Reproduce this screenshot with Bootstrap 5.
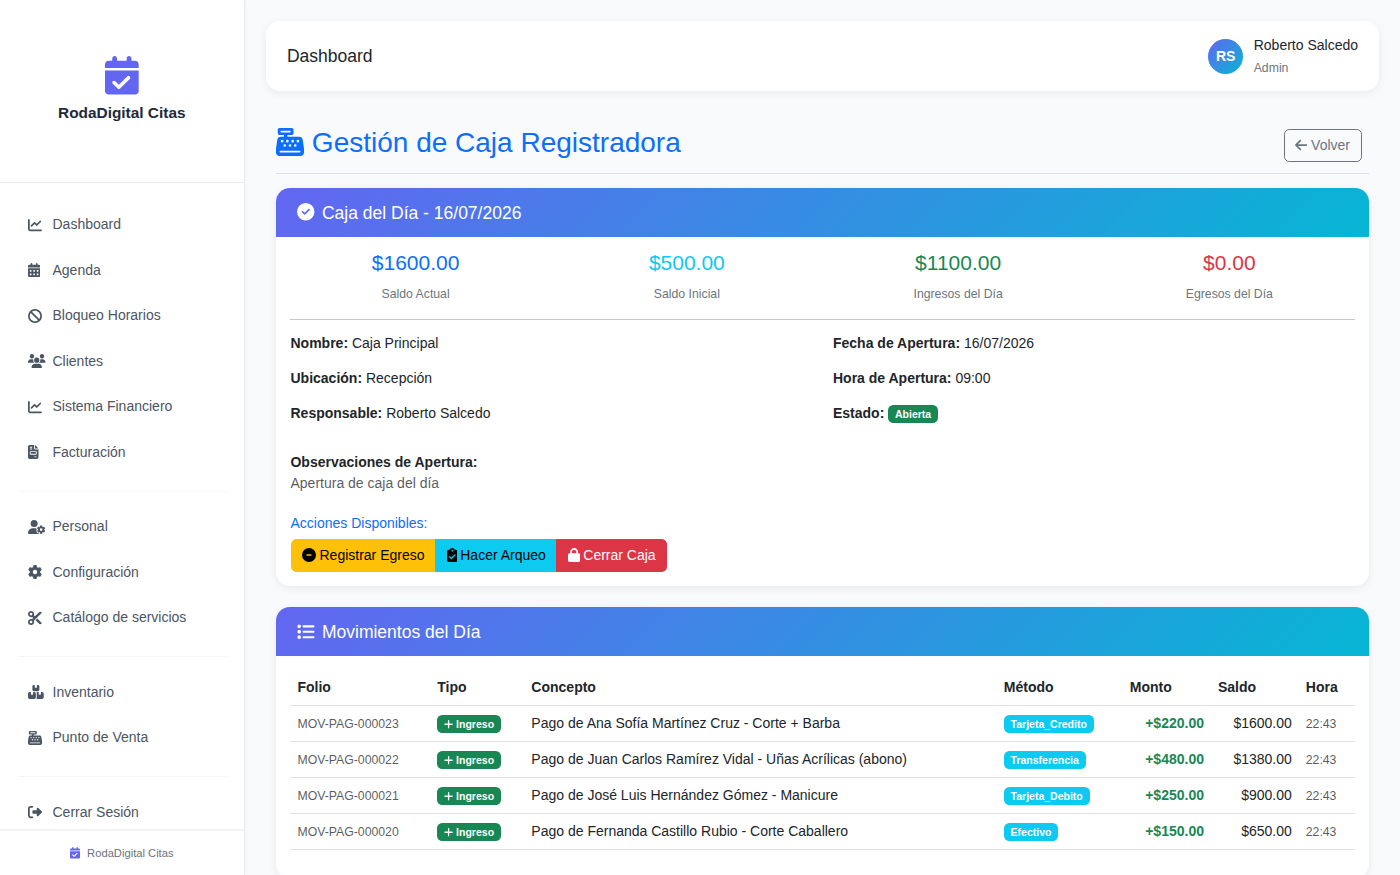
<!DOCTYPE html>
<html lang="es">
<head>
    <meta charset="UTF-8">
    <meta name="viewport" content="width=device-width, initial-scale=1">
    <title>RodaDigital Citas - Caja</title>
    <link rel="stylesheet" href="https://cdn.jsdelivr.net/npm/bootstrap@5.3.3/dist/css/bootstrap.min.css">
    <style>
        html { font-size: 14px; }
        body { font-family: "Liberation Sans", Arial, sans-serif; background: #f8fafc; overflow: hidden; color: #212529; }
        .ico { height: 1em; width: auto; fill: currentColor; vertical-align: -0.125em; }
        .app-shell { height: 875px; overflow: hidden; }
        .side-panel { width: 244.6px; flex: none; background: #fff; border-right: 1px solid #e9ecef; box-shadow: 1px 0 4px rgba(0,0,0,.03); height: 875px; }
        .side-brand { padding: 56px 14px 59px; border-bottom: 1px solid #e9ecef; text-align: center; height: 183px; }
        .side-brand .ico { font-size: 38.5px; color: #6366f1; display: block; margin: 0 auto 7px; }
        .side-brand h1 { font-size: 15.4px; font-weight: 700; line-height: 21px; color: #1e293b; margin: 0; }
        .side-nav { flex: 1 1 0; min-height: 0; overflow: hidden; padding: 18.75px 15px 0 17.5px; }
        .side-group { margin-bottom: 12px; padding-bottom: 16px; border-bottom: 1px solid #f6f7f8; }
        .side-group:last-child { border-bottom: 0; }
        .side-link { display: flex; align-items: center; padding: 0 .75rem; height: 45.5px; color: #4b5563; text-decoration: none; font-size: 14px; line-height: 21px; }
        .side-link .ico-box { width: 24.5px; flex: none; line-height: 1; }
        .side-link .ico { display: block; }
        .side-foot { height: 46px; border-top: 2px solid #f1f3f5; font-size: 11.2px; color: #6b7280; }
        .side-foot .ico { color: #6366f1; margin-right: 7px; font-size: 11.5px; }
        .main-area { padding: 21px; min-width: 0; }
        .top-bar { background: #fff; border-radius: 14px; box-shadow: 0 2px 8px rgba(0,0,0,.07); padding: 14px 21px 14px 21.4px; height: 70px; margin-bottom: 20px; }
        .top-bar .page-name { font-size: 17.5px; color: #212529; }
        .user-avatar { width: 35px; height: 35px; border-radius: 50%; background: linear-gradient(135deg, #6366f1, #06b6d4); color: #fff; font-weight: 700; font-size: 14px; }
        .user-role { font-size: 12.25px; color: #6c757d; margin-top: 2.5px; }
        .caja-title { color: #0d6efd; font-size: 28px; margin-top: 1px; margin-bottom: 6px; }
        .volver-btn { padding-left: 9.5px; padding-right: 10.5px; }
        .caja-card { border: 0; border-radius: 14px; box-shadow: 0 2px 8px rgba(0,0,0,.07); overflow: hidden; }
        .caja-card .card-body { padding-left: 14.4px; }
        .caja-head { background: linear-gradient(135deg, #6366f1, #06b6d4); color: #fff; padding: 15px 21px 13px; font-size: 17.5px; line-height: 21px; }
        .caja-head .ico { margin-right: 2.5px; }
        .stat-num { font-size: 21px; line-height: 24px; margin-bottom: 9.7px; }
        .stat-label { font-size: 12.25px; color: #6c757d; margin: 0; line-height: 21px; }
        .caja-card hr { margin: 13.3px 0 13.2px; }
        .actions-label { color: #0d6efd; font-size: 14px; font-weight: 400; }
        .btn-group { margin-left: .3px; }
        .btn-group .ico { margin-right: -.7px; }
        .mov-table { margin-bottom: 14px; }
        .mov-table th { font-weight: 700; }
    </style>
</head>
<body>
    <svg class="d-none">
        <defs>
            <path id="i-cal-check" d="M128 0c17.7 0 32 14.3 32 32V64H288V32c0-17.7 14.3-32 32-32s32 14.3 32 32V64h48c26.5 0 48 21.5 48 48v48H0V112C0 85.5 21.5 64 48 64H96V32c0-17.7 14.3-32 32-32zM0 192H448V464c0 26.5-21.5 48-48 48H48c-26.5 0-48-21.5-48-48V192zM329 305c9.4-9.4 9.4-24.6 0-33.9s-24.6-9.4-33.9 0l-111 111-47-47c-9.4-9.4-24.6-9.4-33.9 0s-9.4 24.6 0 33.9l64 64c9.4 9.4 24.6 9.4 33.9 0L329 305z"/>
            <path id="i-chart" d="M64 64c0-17.7-14.3-32-32-32S0 46.3 0 64V400c0 44.2 35.8 80 80 80H480c17.7 0 32-14.3 32-32s-14.3-32-32-32H80c-8.8 0-16-7.2-16-16V64zm406.6 86.6c12.5-12.5 12.5-32.8 0-45.3s-32.8-12.5-45.3 0L320 210.7l-57.4-57.4c-12.5-12.5-32.8-12.5-45.3 0l-112 112c-12.5 12.5-12.5 32.8 0 45.3s32.8 12.5 45.3 0L240 221.3l57.4 57.4c12.5 12.5 32.8 12.5 45.3 0l128-128z"/>
            <path id="i-cal-days" d="M128 0c17.7 0 32 14.3 32 32V64H288V32c0-17.7 14.3-32 32-32s32 14.3 32 32V64h48c26.5 0 48 21.5 48 48v48H0V112C0 85.5 21.5 64 48 64H96V32c0-17.7 14.3-32 32-32zM0 192H448V464c0 26.5-21.5 48-48 48H48c-26.5 0-48-21.5-48-48V192zm64 80v32c0 8.8 7.2 16 16 16h32c8.8 0 16-7.2 16-16V272c0-8.8-7.2-16-16-16H80c-8.8 0-16 7.2-16 16zm128 0v32c0 8.8 7.2 16 16 16h32c8.8 0 16-7.2 16-16V272c0-8.8-7.2-16-16-16H208c-8.8 0-16 7.2-16 16zm144-16c-8.8 0-16 7.2-16 16v32c0 8.8 7.2 16 16 16h32c8.8 0 16-7.2 16-16V272c0-8.8-7.2-16-16-16H336zM64 400v32c0 8.8 7.2 16 16 16h32c8.8 0 16-7.2 16-16V400c0-8.8-7.2-16-16-16H80c-8.8 0-16 7.2-16 16zm144-16c-8.8 0-16 7.2-16 16v32c0 8.8 7.2 16 16 16h32c8.8 0 16-7.2 16-16V400c0-8.8-7.2-16-16-16H208zm112 16v32c0 8.8 7.2 16 16 16h32c8.8 0 16-7.2 16-16V400c0-8.8-7.2-16-16-16H336c-8.8 0-16 7.2-16 16z"/>
            <path id="i-ban" d="M367.2 412.5L99.5 144.8C77.1 176.1 64 214.5 64 256c0 106 86 192 192 192c41.5 0 79.9-13.1 111.2-35.5zm45.3-45.3C434.9 335.9 448 297.5 448 256c0-106-86-192-192-192c-41.5 0-79.9 13.1-111.2 35.5L412.5 367.2zM0 256a256 256 0 1 1 512 0A256 256 0 1 1 0 256z"/>
            <path id="i-users" d="M144 0a80 80 0 1 1 0 160A80 80 0 1 1 144 0zM512 0a80 80 0 1 1 0 160A80 80 0 1 1 512 0zM0 298.7C0 239.8 47.8 192 106.7 192h42.7c15.9 0 31 3.5 44.6 9.7c-1.3 7.2-1.9 14.7-1.9 22.3c0 38.2 16.8 72.5 43.3 96c-.2 0-.4 0-.7 0H21.3C9.6 320 0 310.4 0 298.7zM405.3 320c-.2 0-.4 0-.7 0c26.6-23.5 43.3-57.8 43.3-96c0-7.6-.7-15-1.9-22.3c13.6-6.3 28.7-9.7 44.6-9.7h42.7C592.2 192 640 239.8 640 298.7c0 11.8-9.6 21.3-21.3 21.3H405.3zM224 224a96 96 0 1 1 192 0 96 96 0 1 1 -192 0zM128 485.3C128 411.7 187.7 352 261.3 352H378.7C452.3 352 512 411.7 512 485.3c0 14.7-11.9 26.7-26.7 26.7H154.7c-14.7 0-26.7-11.9-26.7-26.7z"/>
            <path id="i-invoice" d="M64 0C28.7 0 0 28.7 0 64V448c0 35.3 28.7 64 64 64H320c35.3 0 64-28.7 64-64V160H256c-17.7 0-32-14.3-32-32V0H64zM256 0V128H384L256 0zM80 64h64c8.8 0 16 7.2 16 16s-7.2 16-16 16H80c-8.8 0-16-7.2-16-16s7.2-16 16-16zm0 64h64c8.8 0 16 7.2 16 16s-7.2 16-16 16H80c-8.8 0-16-7.2-16-16s7.2-16 16-16zm16 96H288c17.7 0 32 14.3 32 32v64c0 17.7-14.3 32-32 32H96c-17.7 0-32-14.3-32-32V256c0-17.7 14.3-32 32-32zm0 32v64H288V256H96zM240 416h64c8.8 0 16 7.2 16 16s-7.2 16-16 16H240c-8.8 0-16-7.2-16-16s7.2-16 16-16z"/>
            <path id="i-user-gear" d="M224 0a128 128 0 1 1 0 256A128 128 0 1 1 224 0zM178.3 304h91.4c11.8 0 23.4 1.2 34.5 3.3c-2.1 18.5 7.4 35.6 21.8 44.8c-16.6 10.6-26.7 31.6-20 53.3c4 12.9 9.4 25.5 16.4 37.6s15.2 23.1 24.4 33c15.7 16.9 39.6 18.4 57.2 8.7v.9c0 9.2 2.7 18.5 7.9 26.3H29.7C13.3 512 0 498.7 0 482.3C0 383.8 79.8 304 178.3 304zM436 218.2c0-7 4.5-13.3 11.3-14.8c10.5-2.4 21.5-3.7 32.7-3.7s22.2 1.3 32.7 3.7c6.8 1.5 11.3 7.8 11.3 14.8v30.6c7.9 3.4 15.4 7.7 22.3 12.8l24.9-14.3c6.1-3.5 13.7-2.7 18.5 2.4c7.6 8.1 14.3 17.2 20.1 27.2s10.3 20.4 13.5 31c2.1 6.7-1.1 13.7-7.2 17.2l-25 14.4c.4 4 .7 8.1 .7 12.3s-.2 8.2-.7 12.3l25 14.4c6.1 3.5 9.2 10.5 7.2 17.2c-3.3 10.6-7.8 21-13.5 31s-12.5 19.1-20.1 27.2c-4.8 5.1-12.5 5.9-18.5 2.4l-24.9-14.3c-6.9 5.1-14.3 9.4-22.3 12.8l0 30.6c0 7-4.5 13.3-11.3 14.8c-10.5 2.4-21.5 3.7-32.7 3.7s-22.2-1.3-32.7-3.7c-6.8-1.5-11.3-7.8-11.3-14.8V454.8c-8-3.4-15.6-7.7-22.5-12.9l-24.7 14.3c-6.1 3.5-13.7 2.7-18.5-2.4c-7.6-8.1-14.3-17.2-20.1-27.2s-10.3-20.4-13.5-31c-2.1-6.7 1.1-13.7 7.2-17.2l24.8-14.3c-.4-4.1-.7-8.2-.7-12.4s.2-8.3 .7-12.4L343.8 325c-6.1-3.5-9.2-10.5-7.2-17.2c3.3-10.6 7.7-21 13.5-31s12.5-19.1 20.1-27.2c4.8-5.1 12.4-5.9 18.5-2.4l24.8 14.3c6.9-5.1 14.5-9.4 22.5-12.9V218.2zm92.1 133.5a48.1 48.1 0 1 0 -96.1 0 48.1 48.1 0 1 0 96.1 0z"/>
            <path id="i-gear" d="M495.9 166.6c3.2 8.7 .5 18.4-6.4 24.6l-43.3 39.4c1.1 8.3 1.7 16.8 1.7 25.4s-.6 17.1-1.7 25.4l43.3 39.4c6.9 6.2 9.6 15.9 6.4 24.6c-4.4 11.9-9.7 23.3-15.8 34.3l-4.7 8.1c-6.6 11-14 21.4-22.1 31.2c-5.9 7.2-15.7 9.6-24.5 6.8l-55.7-17.7c-13.4 10.3-28.2 18.9-44 25.4l-12.5 57.1c-2 9.1-9 16.3-18.2 17.8c-13.8 2.3-28 3.5-42.5 3.5s-28.7-1.2-42.5-3.5c-9.2-1.5-16.2-8.7-18.2-17.8l-12.5-57.1c-15.8-6.5-30.6-15.1-44-25.4L83.1 425.9c-8.8 2.8-18.6 .3-24.5-6.8c-8.1-9.8-15.5-20.2-22.1-31.2l-4.7-8.1c-6.1-11-11.4-22.4-15.8-34.3c-3.2-8.7-.5-18.4 6.4-24.6l43.3-39.4C64.6 273.1 64 264.6 64 256s.6-17.1 1.7-25.4L22.4 191.2c-6.9-6.2-9.6-15.9-6.4-24.6c4.4-11.9 9.7-23.3 15.8-34.3l4.7-8.1c6.6-11 14-21.4 22.1-31.2c5.9-7.2 15.7-9.6 24.5-6.8l55.7 17.7c13.4-10.3 28.2-18.9 44-25.4l12.5-57.1c2-9.1 9-16.3 18.2-17.8C227.3 1.2 241.5 0 256 0s28.7 1.2 42.5 3.5c9.2 1.5 16.2 8.7 18.2 17.8l12.5 57.1c15.8 6.5 30.6 15.1 44 25.4l55.7-17.7c8.8-2.8 18.6-.3 24.5 6.8c8.1 9.8 15.5 20.2 22.1 31.2l4.7 8.1c6.1 11 11.4 22.4 15.8 34.3zM256 336a80 80 0 1 0 0-160 80 80 0 1 0 0 160z"/>
            <path id="i-scissors" d="M256 192l-39.5-39.5c4.9-12.6 7.5-26.2 7.5-40.5C224 50.1 173.9 0 112 0S0 50.1 0 112s50.1 112 112 112c14.3 0 27.9-2.7 40.5-7.5L192 256l-39.5 39.5c-12.6-4.9-26.2-7.5-40.5-7.5C50.1 288 0 338.1 0 400s50.1 112 112 112s112-50.1 112-112c0-14.3-2.7-27.9-7.5-40.5L499.2 76.8c7.1-7.1 7.1-18.5 0-25.6c-28.3-28.3-74.1-28.3-102.4 0L256 192zm22.6 150.6L396.8 460.8c28.3 28.3 74.1 28.3 102.4 0c7.1-7.1 7.1-18.5 0-25.6L342.6 278.6l-64 64zM64 112a48 48 0 1 1 96 0 48 48 0 1 1 -96 0zm48 240a48 48 0 1 1 0 96 48 48 0 1 1 0-96z"/>
            <path id="i-boxes" d="M248 0H208c-26.5 0-48 21.5-48 48V160c0 35.3 28.7 64 64 64H352c35.3 0 64-28.7 64-64V48c0-26.5-21.5-48-48-48H328V80c0 8.8-7.2 16-16 16H264c-8.8 0-16-7.2-16-16V0zM64 256c-35.3 0-64 28.7-64 64V448c0 35.3 28.7 64 64 64H224c35.3 0 64-28.7 64-64V320c0-35.3-28.7-64-64-64H184v80c0 8.8-7.2 16-16 16H120c-8.8 0-16-7.2-16-16V256H64zM352 512H512c35.3 0 64-28.7 64-64V320c0-35.3-28.7-64-64-64H472v80c0 8.8-7.2 16-16 16H408c-8.8 0-16-7.2-16-16V256H352c-15 0-28.8 5.1-39.7 13.8c4.9 10.4 7.7 22 7.7 34.2V464c0 18-6 34.6-16 48H352z"/>
            <path id="i-register" d="M64 0C46.3 0 32 14.3 32 32V96c0 17.7 14.3 32 32 32h80v32H87c-31.6 0-58.5 23.1-63.3 54.4L1.1 364.1C.4 368.8 0 373.6 0 378.4V448c0 35.3 28.7 64 64 64H448c35.3 0 64-28.7 64-64V378.4c0-4.8-.4-9.6-1.1-14.4L488.2 214.4C483.5 183.1 456.6 160 425 160H208V128h80c17.7 0 32-14.3 32-32V32c0-17.7-14.3-32-32-32H64zM96 48H256c8.8 0 16 7.2 16 16s-7.2 16-16 16H96c-8.8 0-16-7.2-16-16s7.2-16 16-16zM64 432c0-8.8 7.2-16 16-16H432c8.8 0 16 7.2 16 16s-7.2 16-16 16H80c-8.8 0-16-7.2-16-16zm48-168a24 24 0 1 1 0-48 24 24 0 1 1 0 48zm120-24a24 24 0 1 1 -48 0 24 24 0 1 1 48 0zM160 344a24 24 0 1 1 0-48 24 24 0 1 1 0 48zM328 240a24 24 0 1 1 -48 0 24 24 0 1 1 48 0zM256 344a24 24 0 1 1 0-48 24 24 0 1 1 0 48zM424 240a24 24 0 1 1 -48 0 24 24 0 1 1 48 0zM352 344a24 24 0 1 1 0-48 24 24 0 1 1 0 48z"/>
            <path id="i-logout" d="M377.9 105.9L500.7 228.7c7.2 7.2 11.3 17.1 11.3 27.3s-4.1 20.1-11.3 27.3L377.9 406.1c-6.4 6.4-15 9.9-24 9.9c-18.7 0-33.9-15.2-33.9-33.9l0-62.1-128 0c-17.7 0-32-14.3-32-32l0-64c0-17.7 14.3-32 32-32l128 0 0-62.1c0-18.7 15.2-33.9 33.9-33.9c9 0 17.6 3.6 24 9.9zM160 96L96 96c-17.7 0-32 14.3-32 32l0 256c0 17.7 14.3 32 32 32l64 0c17.7 0 32 14.3 32 32s-14.3 32-32 32l-64 0c-53 0-96-43-96-96L0 128C0 75 43 32 96 32l64 0c17.7 0 32 14.3 32 32s-14.3 32-32 32z"/>
            <path id="i-circle-check" d="M256 512A256 256 0 1 0 256 0a256 256 0 1 0 0 512zM369 209L241 337c-9.4 9.4-24.6 9.4-33.9 0l-64-64c-9.4-9.4-9.4-24.6 0-33.9s24.6-9.4 33.9 0l47 47L335 175c9.4-9.4 24.6-9.4 33.9 0s9.4 24.6 0 33.9z"/>
            <path id="i-list" d="M40 48C26.7 48 16 58.7 16 72v48c0 13.3 10.7 24 24 24H88c13.3 0 24-10.7 24-24V72c0-13.3-10.7-24-24-24H40zM192 64c-17.7 0-32 14.3-32 32s14.3 32 32 32H480c17.7 0 32-14.3 32-32s-14.3-32-32-32H192zm0 160c-17.7 0-32 14.3-32 32s14.3 32 32 32H480c17.7 0 32-14.3 32-32s-14.3-32-32-32H192zm0 160c-17.7 0-32 14.3-32 32s14.3 32 32 32H480c17.7 0 32-14.3 32-32s-14.3-32-32-32H192zM16 232v48c0 13.3 10.7 24 24 24H88c13.3 0 24-10.7 24-24V232c0-13.3-10.7-24-24-24H40c-13.3 0-24 10.7-24 24zM40 368c-13.3 0-24 10.7-24 24v48c0 13.3 10.7 24 24 24H88c13.3 0 24-10.7 24-24V392c0-13.3-10.7-24-24-24H40z"/>
            <path id="i-arrow-left" d="M9.4 233.4c-12.5 12.5-12.5 32.8 0 45.3l160 160c12.5 12.5 32.8 12.5 45.3 0s12.5-32.8 0-45.3L109.2 288 416 288c17.7 0 32-14.3 32-32s-14.3-32-32-32l-306.7 0L214.6 118.6c12.5-12.5 12.5-32.8 0-45.3s-32.8-12.5-45.3 0l-160 160z"/>
            <path id="i-plus" d="M256 80c0-17.7-14.3-32-32-32s-32 14.3-32 32V224H48c-17.7 0-32 14.3-32 32s14.3 32 32 32H192V432c0 17.7 14.3 32 32 32s32-14.3 32-32V288H400c17.7 0 32-14.3 32-32s-14.3-32-32-32H256V80z"/>
            <path id="i-circle-minus" d="M256 512A256 256 0 1 0 256 0a256 256 0 1 0 0 512zM184 232H328c13.3 0 24 10.7 24 24s-10.7 24-24 24H184c-13.3 0-24-10.7-24-24s10.7-24 24-24z"/>
            <path id="i-lock" d="M144 144v48H304V144c0-44.2-35.8-80-80-80s-80 35.8-80 80zM80 192V144C80 64.5 144.5 0 224 0s144 64.5 144 144v48h16c35.3 0 64 28.7 64 64V448c0 35.3-28.7 64-64 64H64c-35.3 0-64-28.7-64-64V256c0-35.3 28.7-64 64-64H80z"/>
            <path id="i-clipboard" d="M192 0c-41.8 0-77.4 26.7-90.5 64H64C28.7 64 0 92.7 0 128V448c0 35.3 28.7 64 64 64H320c35.3 0 64-28.7 64-64V128c0-35.3-28.7-64-64-64H282.5C269.4 26.7 233.8 0 192 0zm0 64a32 32 0 1 1 0 64 32 32 0 1 1 0-64zM305 273L177 401c-9.4 9.4-24.6 9.4-33.9 0L79 337c-9.4-9.4-9.4-24.6 0-33.9s24.6-9.4 33.9 0l47 47L271 239c9.4-9.4 24.6-9.4 33.9 0s9.4 24.6 0 33.9z"/>
        </defs>
    </svg>

    <div class="app-shell d-flex">
        <aside class="side-panel d-flex flex-column">
            <div class="side-brand">
                <svg class="ico" viewBox="0 0 448 512"><use href="#i-cal-check"/></svg>
                <h1>RodaDigital Citas</h1>
            </div>
            <nav class="side-nav">
                <div class="side-group">
                    <a class="side-link" href="#"><span class="ico-box"><svg class="ico" viewBox="0 0 512 512"><use href="#i-chart"/></svg></span>Dashboard</a>
                    <a class="side-link" href="#"><span class="ico-box"><svg class="ico" viewBox="0 0 448 512"><use href="#i-cal-days"/></svg></span>Agenda</a>
                    <a class="side-link" href="#"><span class="ico-box"><svg class="ico" viewBox="0 0 512 512"><use href="#i-ban"/></svg></span>Bloqueo Horarios</a>
                    <a class="side-link" href="#"><span class="ico-box"><svg class="ico" viewBox="0 0 640 512"><use href="#i-users"/></svg></span>Clientes</a>
                    <a class="side-link" href="#"><span class="ico-box"><svg class="ico" viewBox="0 0 512 512"><use href="#i-chart"/></svg></span>Sistema Financiero</a>
                    <a class="side-link" href="#"><span class="ico-box"><svg class="ico" viewBox="0 0 384 512"><use href="#i-invoice"/></svg></span>Facturación</a>
                </div>
                <div class="side-group">
                    <a class="side-link" href="#"><span class="ico-box"><svg class="ico" viewBox="0 0 640 512"><use href="#i-user-gear"/></svg></span>Personal</a>
                    <a class="side-link" href="#"><span class="ico-box"><svg class="ico" viewBox="0 0 512 512"><use href="#i-gear"/></svg></span>Configuración</a>
                    <a class="side-link" href="#"><span class="ico-box"><svg class="ico" viewBox="0 0 512 512"><use href="#i-scissors"/></svg></span>Catálogo de servicios</a>
                </div>
                <div class="side-group">
                    <a class="side-link" href="#"><span class="ico-box"><svg class="ico" viewBox="0 0 576 512"><use href="#i-boxes"/></svg></span>Inventario</a>
                    <a class="side-link" href="#"><span class="ico-box"><svg class="ico" viewBox="0 0 512 512"><use href="#i-register"/></svg></span>Punto de Venta</a>
                </div>
                <div class="side-group">
                    <a class="side-link" href="#"><span class="ico-box"><svg class="ico" viewBox="0 0 512 512"><use href="#i-logout"/></svg></span>Cerrar Sesión</a>
                </div>
            </nav>
            <div class="side-foot d-flex align-items-center justify-content-center">
                <svg class="ico" viewBox="0 0 448 512"><use href="#i-cal-check"/></svg>RodaDigital Citas
            </div>
        </aside>

        <main class="main-area flex-grow-1">
            <div class="top-bar d-flex align-items-center justify-content-between">
                <div class="page-name">Dashboard</div>
                <div class="d-flex align-items-center">
                    <div class="user-avatar d-flex align-items-center justify-content-center me-2">RS</div>
                    <div class="ms-1">
                        <div>Roberto Salcedo</div>
                        <div class="user-role">Admin</div>
                    </div>
                </div>
            </div>

            <div class="container-fluid">
                <div class="d-flex justify-content-between align-items-center pt-3 pb-2 mb-3 border-bottom">
                    <h2 class="caja-title"><svg class="ico" viewBox="0 0 512 512"><use href="#i-register"/></svg> Gestión de Caja Registradora</h2>
                    <a href="#" class="btn btn-outline-secondary volver-btn me-2"><svg class="ico" viewBox="0 0 448 512"><use href="#i-arrow-left"/></svg> Volver</a>
                </div>

                <div class="card caja-card mb-4">
                    <div class="caja-head"><svg class="ico" viewBox="0 0 512 512"><use href="#i-circle-check"/></svg> Caja del Día - 16/07/2026</div>
                    <div class="card-body">
                        <div class="row text-center">
                            <div class="col-3"><div class="stat-num text-primary">$1600.00</div><p class="stat-label">Saldo Actual</p></div>
                            <div class="col-3"><div class="stat-num text-info">$500.00</div><p class="stat-label">Saldo Inicial</p></div>
                            <div class="col-3"><div class="stat-num text-success">$1100.00</div><p class="stat-label">Ingresos del Día</p></div>
                            <div class="col-3"><div class="stat-num text-danger">$0.00</div><p class="stat-label">Egresos del Día</p></div>
                        </div>
                        <hr>
                        <div class="row">
                            <div class="col-6">
                                <p><strong>Nombre:</strong> Caja Principal</p>
                                <p><strong>Ubicación:</strong> Recepción</p>
                                <p><strong>Responsable:</strong> Roberto Salcedo</p>
                            </div>
                            <div class="col-6">
                                <p><strong>Fecha de Apertura:</strong> 16/07/2026</p>
                                <p><strong>Hora de Apertura:</strong> 09:00</p>
                                <p><strong>Estado:</strong> <span class="badge bg-success">Abierta</span></p>
                            </div>
                        </div>
                        <div class="mt-3">
                            <strong>Observaciones de Apertura:</strong>
                            <p class="text-muted mb-0">Apertura de caja del día</p>
                        </div>
                        <div class="mt-4">
                            <h6 class="actions-label">Acciones Disponibles:</h6>
                            <div class="btn-group" role="group">
                                <button type="button" class="btn btn-warning"><svg class="ico" viewBox="0 0 512 512"><use href="#i-circle-minus"/></svg> Registrar Egreso</button>
                                <button type="button" class="btn btn-info"><svg class="ico" viewBox="0 0 384 512"><use href="#i-clipboard"/></svg> Hacer Arqueo</button>
                                <button type="button" class="btn btn-danger"><svg class="ico" viewBox="0 0 448 512"><use href="#i-lock"/></svg> Cerrar Caja</button>
                            </div>
                        </div>
                    </div>
                </div>

                <div class="card caja-card mb-4">
                    <div class="caja-head"><svg class="ico" viewBox="0 0 512 512"><use href="#i-list"/></svg> Movimientos del Día</div>
                    <div class="card-body">
                        <table class="table table-hover mov-table">
                            <thead>
                                <tr><th>Folio</th><th>Tipo</th><th>Concepto</th><th>Método</th><th>Monto</th><th>Saldo</th><th>Hora</th></tr>
                            </thead>
                            <tbody>
                                <tr>
                                    <td><small class="text-muted">MOV-PAG-000023</small></td>
                                    <td><span class="badge bg-success"><svg class="ico" viewBox="0 0 448 512"><use href="#i-plus"/></svg> Ingreso</span></td>
                                    <td>Pago de Ana Sofía Martínez Cruz - Corte + Barba</td>
                                    <td><span class="badge bg-info">Tarjeta_Credito</span></td>
                                    <td class="text-end text-success fw-bold">+$220.00</td>
                                    <td class="text-end">$1600.00</td>
                                    <td><small class="text-muted">22:43</small></td>
                                </tr>
                                <tr>
                                    <td><small class="text-muted">MOV-PAG-000022</small></td>
                                    <td><span class="badge bg-success"><svg class="ico" viewBox="0 0 448 512"><use href="#i-plus"/></svg> Ingreso</span></td>
                                    <td>Pago de Juan Carlos Ramírez Vidal - Uñas Acrílicas (abono)</td>
                                    <td><span class="badge bg-info">Transferencia</span></td>
                                    <td class="text-end text-success fw-bold">+$480.00</td>
                                    <td class="text-end">$1380.00</td>
                                    <td><small class="text-muted">22:43</small></td>
                                </tr>
                                <tr>
                                    <td><small class="text-muted">MOV-PAG-000021</small></td>
                                    <td><span class="badge bg-success"><svg class="ico" viewBox="0 0 448 512"><use href="#i-plus"/></svg> Ingreso</span></td>
                                    <td>Pago de José Luis Hernández Gómez - Manicure</td>
                                    <td><span class="badge bg-info">Tarjeta_Debito</span></td>
                                    <td class="text-end text-success fw-bold">+$250.00</td>
                                    <td class="text-end">$900.00</td>
                                    <td><small class="text-muted">22:43</small></td>
                                </tr>
                                <tr>
                                    <td><small class="text-muted">MOV-PAG-000020</small></td>
                                    <td><span class="badge bg-success"><svg class="ico" viewBox="0 0 448 512"><use href="#i-plus"/></svg> Ingreso</span></td>
                                    <td>Pago de Fernanda Castillo Rubio - Corte Caballero</td>
                                    <td><span class="badge bg-info">Efectivo</span></td>
                                    <td class="text-end text-success fw-bold">+$150.00</td>
                                    <td class="text-end">$650.00</td>
                                    <td><small class="text-muted">22:43</small></td>
                                </tr>
                            </tbody>
                        </table>
                    </div>
                </div>
            </div>
        </main>
    </div>

    <script src="https://cdn.jsdelivr.net/npm/bootstrap@5.3.3/dist/js/bootstrap.bundle.min.js"></script>
</body>
</html>
